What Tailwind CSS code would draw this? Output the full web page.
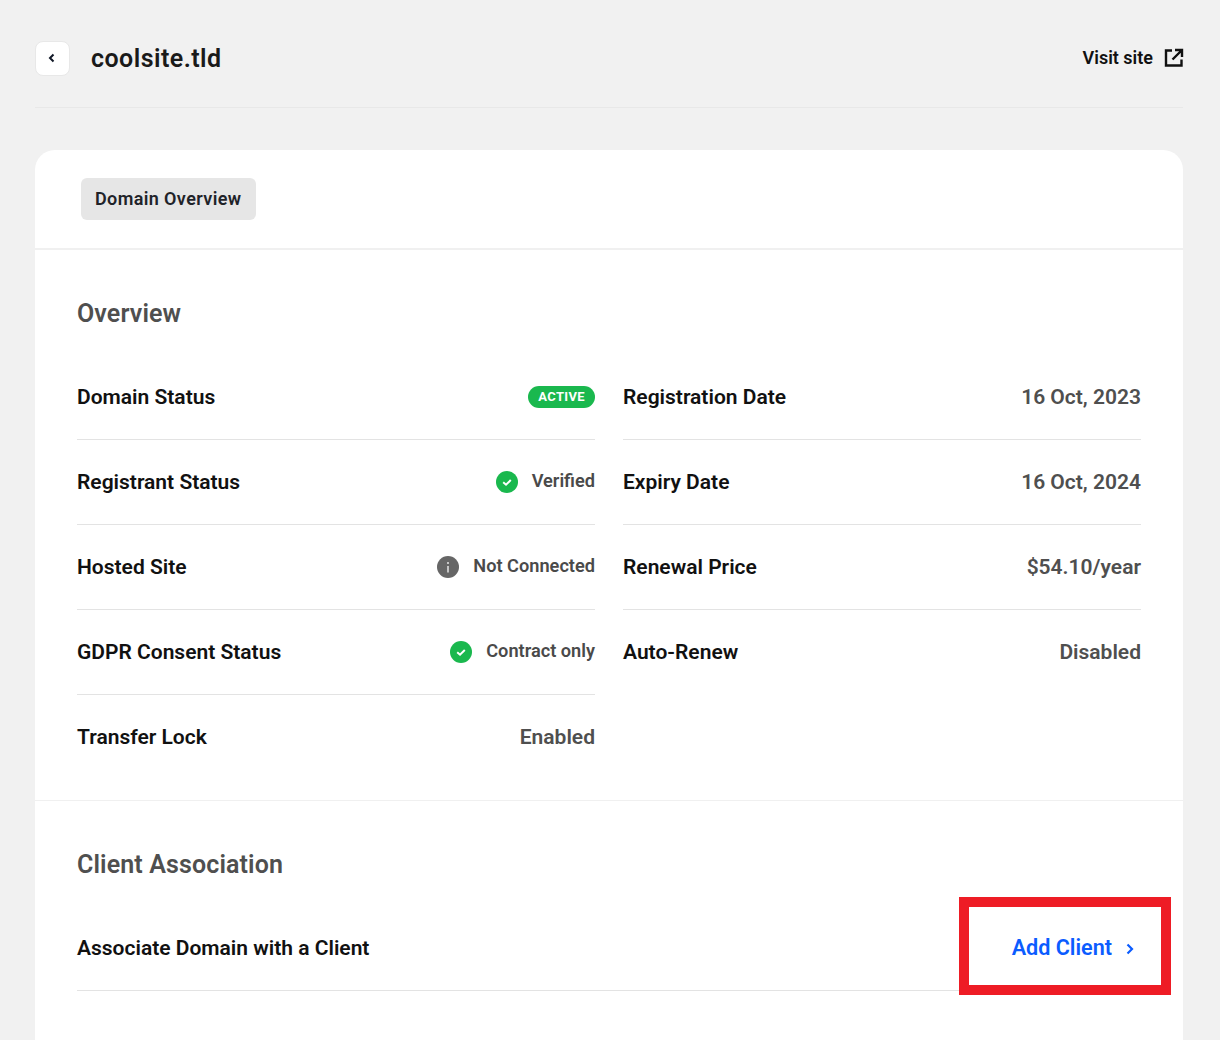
<!DOCTYPE html>
<html>
<head>
<meta charset="utf-8">
<script src="https://cdn.jsdelivr.net/npm/@tailwindcss/browser@4"></script>
</head>
<body class="bg-[#f1f1f1] font-[Roboto,sans-serif] h-[1040px] overflow-hidden relative">
<div class="pl-[35px] pr-[37px]">
  <header class="h-[108px] pt-[41px] border-b border-[#e8e8e8]">
    <div class="flex items-center justify-between h-[35px]">
      <div class="flex items-center gap-[21px]">
        <button class="w-[35px] h-[35px] bg-white border border-[#e8e8e8] rounded-lg flex items-center justify-center">
          <svg width="12" height="12" viewBox="0 0 12 12" fill="none" stroke="#111827" stroke-width="2" class="-mt-[1px] -ml-[1px]"><path d="M7.500 2.500 4 6l3.500 3.500"/></svg>
        </button>
        <h1 class="text-[25px] font-semibold text-[#1a1a1a] leading-[35px] tracking-[0.45px]">coolsite.tld</h1>
      </div>
      <a class="flex items-center gap-[11px] text-[18px] font-semibold text-[#111] -mt-[2px] -mr-[1px]">Visit site
        <svg width="20" height="20" viewBox="0 0 20 20" fill="none" stroke="#111" stroke-width="2.400"><path d="M8 2.500H2v15h15.500v-6M11 2h7v7M18 2 8.500 11.500"/></svg>
      </a>
    </div>
  </header>
  <main class="mt-[42px] bg-white rounded-t-[20px] h-[900px]">
    <div class="h-[100px] pt-[28px] pl-[46px] border-b-2 border-[#f0f0f0]">
      <div class="inline-flex items-center h-[42px] pb-[1px] pl-[14px] pr-[15px] bg-[#e6e6e6] rounded-md text-[18px] font-semibold text-[#1f2329] tracking-[0.38px]">Domain Overview</div>
    </div>
    <section class="h-[551px] px-[42px] pt-[46px] border-b border-[#f0f0f0]">
      <h2 class="text-[25px] font-semibold text-[#4f4f4f] leading-[36px] h-[59px] tracking-[0.12px]">Overview</h2>
      <div class="grid grid-cols-2 gap-x-[28px] items-start text-[21px] leading-[28px] font-semibold">
        <div>
          <div class="flex items-center justify-between h-[85px] border-b border-[#e3e3e3]">
            <span class="text-[#111]">Domain Status</span>
            <span class="h-[22px] px-[10px] rounded-full bg-[#1ab84e] text-white text-[13px] font-bold leading-[22px] tracking-[0.35px]">ACTIVE</span>
          </div>
          <div class="flex items-center justify-between h-[85px] border-b border-[#e3e3e3]">
            <span class="text-[#111]">Registrant Status</span>
            <span class="flex items-center gap-[14px] text-[18.200px] text-[#4a4a4a]">
              <svg width="22" height="22" viewBox="0 0 22 22"><circle cx="11" cy="11" r="11" fill="#1ab84e"/><path d="M7.200 11.300 10 13.700 14.800 9" fill="none" stroke="#fff" stroke-width="2"/></svg><span class="pb-[2px]">Verified</span></span>
          </div>
          <div class="flex items-center justify-between h-[85px] border-b border-[#e3e3e3]">
            <span class="text-[#111]">Hosted Site</span>
            <span class="flex items-center gap-[14px] text-[18.200px] text-[#4a4a4a]">
              <svg width="22" height="22" viewBox="0 0 22 22"><circle cx="11" cy="11" r="11" fill="#666"/><path d="M11 10v6.500M11 6v2" fill="none" stroke="#ddd" stroke-width="1.600"/></svg><span class="pb-[2px]">Not Connected</span></span>
          </div>
          <div class="flex items-center justify-between h-[85px] border-b border-[#e3e3e3]">
            <span class="text-[#111]">GDPR Consent Status</span>
            <span class="flex items-center gap-[14px] text-[18.200px] text-[#4a4a4a]">
              <svg width="22" height="22" viewBox="0 0 22 22"><circle cx="11" cy="11" r="11" fill="#1ab84e"/><path d="M7.200 11.300 10 13.700 14.800 9" fill="none" stroke="#fff" stroke-width="2"/></svg><span class="pb-[2px]">Contract only</span></span>
          </div>
          <div class="flex items-center justify-between h-[85px] pb-[1px]">
            <span class="text-[#111]">Transfer Lock</span>
            <span class="text-[#4f4f4f]">Enabled</span>
          </div>
        </div>
        <div>
          <div class="flex items-center justify-between h-[85px] border-b border-[#e3e3e3]">
            <span class="text-[#111]">Registration Date</span>
            <span class="text-[#4f4f4f]">16 Oct, 2023</span>
          </div>
          <div class="flex items-center justify-between h-[85px] border-b border-[#e3e3e3]">
            <span class="text-[#111]">Expiry Date</span>
            <span class="text-[#4f4f4f]">16 Oct, 2024</span>
          </div>
          <div class="flex items-center justify-between h-[85px] border-b border-[#e3e3e3]">
            <span class="text-[#111]">Renewal Price</span>
            <span class="text-[#4f4f4f]">$54.10/year</span>
          </div>
          <div class="flex items-center justify-between h-[85px] pb-[1px]">
            <span class="text-[#111]">Auto-Renew</span>
            <span class="text-[#4f4f4f]">Disabled</span>
          </div>
        </div>
      </div>
    </section>
    <section class="px-[42px] pt-[46px]">
      <h2 class="text-[25px] font-semibold text-[#4f4f4f] leading-[36px] tracking-[0.12px]">Client Association</h2>
      <div class="flex items-center justify-between h-[85px] mt-[23px] border-b border-[#e3e3e3] font-semibold leading-[28px]">
        <span class="text-[21px] text-[#111]">Associate Domain with a Client</span>
        <a class="flex items-center gap-[12px] text-[21.600px] text-[#0b5cff] pr-[5px]">Add Client
          <svg width="12" height="12" viewBox="0 0 12 12" fill="none" stroke="#0b5cff" stroke-width="2.200" class="mt-[2px]"><path d="M3.500 1.500 8 6l-4.500 4.500"/></svg>
        </a>
      </div>
    </section>
  </main>
</div>
<div class="absolute left-[959px] top-[897px] w-[212px] h-[98px] border-[10px] border-[#ee1c25]"></div>
</body>
</html>
